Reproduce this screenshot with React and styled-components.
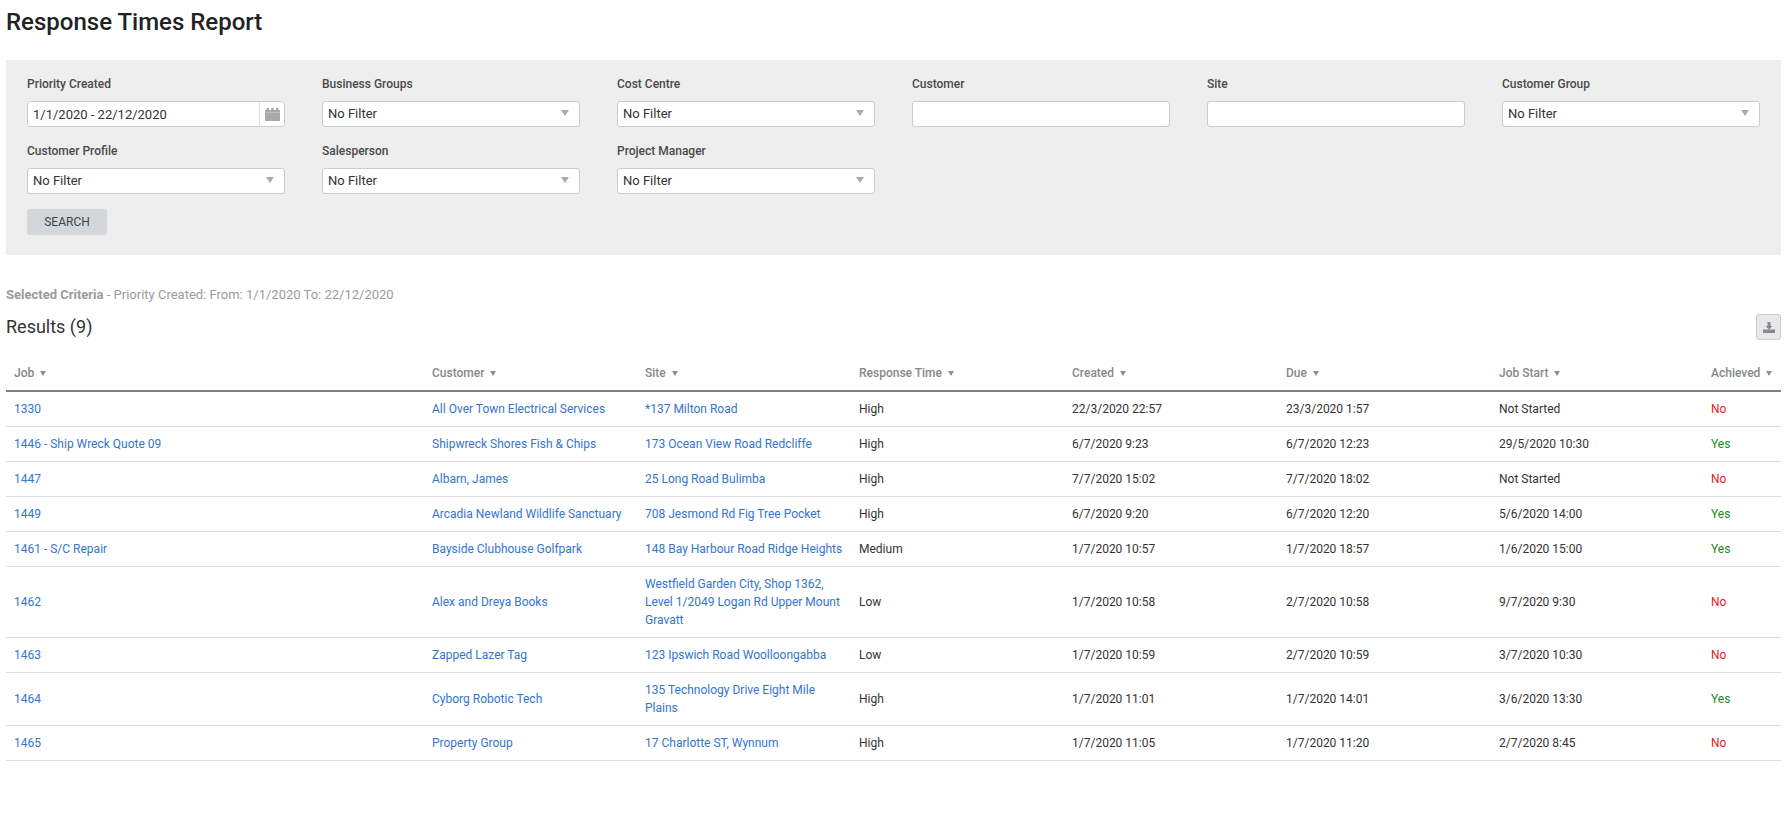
import React from "react";
import styled, { createGlobalStyle } from "styled-components";

const GlobalStyle = createGlobalStyle`
  html, body {
    margin: 0;
    padding: 0;
    background: #fff;
    font-family: Roboto, "Liberation Sans", sans-serif;
    color: #333;
  }
`;

const Page = styled.div`
  padding: 0 6px;
`;

const Title = styled.h1`
  margin: 0;
  padding-top: 6px;
  height: 60px;
  box-sizing: border-box;
  font-size: 24px;
  line-height: 32px;
  font-weight: 500;
  color: #222;
`;

const FilterPanel = styled.form`
  background: #eeeeee;
  height: 195px;
  box-sizing: border-box;
  padding: 15px 21px 0;
`;

const FilterGrid = styled.div`
  display: grid;
  grid-template-columns: repeat(6, 258px);
  column-gap: 37px;
  row-gap: 15px;
`;

const Field = styled.div`
  display: flex;
  flex-direction: column;
`;

const Label = styled.label`
  font-size: 12px;
  line-height: 18px;
  font-weight: 500;
  color: #4a4a4a;
  margin-bottom: 8px;
`;

const TextInput = styled.input`
  box-sizing: border-box;
  width: 100%;
  height: 26px;
  padding: 0 5px;
  border: 1px solid #ccc;
  border-radius: 3px;
  background: #fff;
  font: 400 13px Roboto, sans-serif;
  color: #333;
  outline: none;
`;

const DateWrap = styled.div`
  display: flex;
  height: 26px;
  box-sizing: border-box;
  border: 1px solid #ccc;
  border-radius: 3px;
  background: #fff;
`;

const DateInput = styled(TextInput)`
  flex: 1;
  min-width: 0;
  height: 24px;
  border: none;
`;

const DateButton = styled.span`
  width: 24px;
  border-left: 1px solid #ddd;
  display: flex;
  align-items: center;
  justify-content: center;
`;

const SelectBox = styled.div`
  position: relative;
  height: 26px;
  box-sizing: border-box;
  border: 1px solid #ccc;
  border-radius: 3px;
  background: #fff;
  padding: 0 5px;
  font-size: 13px;
  line-height: 23px;
  color: #333;
`;

const Caret = styled.span`
  position: absolute;
  top: 8px;
  right: 10px;
  width: 0;
  height: 0;
  border-left: 4px solid transparent;
  border-right: 4px solid transparent;
  border-top: 6px solid #aaa;
`;

const SearchButton = styled.button`
  display: block;
  margin-top: 15px;
  width: 80px;
  height: 26px;
  padding: 0;
  border: none;
  border-radius: 2px;
  background: #d4d7da;
  font: 400 12px Roboto, sans-serif;
  color: #444;
`;

const Criteria = styled.p`
  margin: 0;
  padding-top: 30px;
  font-size: 13px;
  line-height: 20px;
  color: #9b9b9b;
  b {
    font-weight: 700;
  }
`;

const ResultsBar = styled.div`
  display: flex;
  align-items: flex-start;
  justify-content: space-between;
  height: 41px;
  margin-top: 9px;
`;

const ResultsTitle = styled.h2`
  margin: 0;
  padding-top: 1px;
  font-size: 18px;
  line-height: 24px;
  font-weight: 400;
  color: #333;
`;

const ExportButton = styled.button`
  width: 25px;
  height: 26px;
  padding: 0;
  border: 1px solid #ccc;
  border-radius: 3px;
  background: #e8e8e8;
  display: flex;
  align-items: center;
  justify-content: center;
`;

const Table = styled.table`
  border-collapse: collapse;
  table-layout: fixed;
  width: 100%;
  font-size: 12px;
`;

const HeadCell = styled.th`
  padding: 0 8px;
  height: 36px;
  box-sizing: border-box;
  text-align: left;
  font-size: 12px;
  font-weight: 500;
  color: #85898b;
  border-bottom: 2px solid #808080;
  white-space: nowrap;
`;

const SortCaret = styled.span`
  display: inline-block;
  margin-left: 6px;
  vertical-align: 1px;
  border-left: 3px solid transparent;
  border-right: 3px solid transparent;
  border-top: 5px solid #8f8f8f;
`;

const Cell = styled.td`
  padding: 8px;
  line-height: 18px;
  border-bottom: 1px solid #ddd;
  color: ${p => p.$color || "#333"};
`;

const RowLink = styled.a`
  color: #3375cf;
  text-decoration: none;
`;

const columns = [
  { name: "Job", width: 418 },
  { name: "Customer", width: 213 },
  { name: "Site", width: 214 },
  { name: "Response Time", width: 213 },
  { name: "Created", width: 214 },
  { name: "Due", width: 213 },
  { name: "Job Start", width: 212 },
  { name: "Achieved", width: 78 },
];

const rows = [
  ["1330", "All Over Town Electrical Services", "*137 Milton Road", "High", "22/3/2020 22:57", "23/3/2020 1:57", "Not Started", "No"],
  ["1446 - Ship Wreck Quote 09", "Shipwreck Shores Fish & Chips", "173 Ocean View Road Redcliffe", "High", "6/7/2020 9:23", "6/7/2020 12:23", "29/5/2020 10:30", "Yes"],
  ["1447", "Albarn, James", "25 Long Road Bulimba", "High", "7/7/2020 15:02", "7/7/2020 18:02", "Not Started", "No"],
  ["1449", "Arcadia Newland Wildlife Sanctuary", "708 Jesmond Rd Fig Tree Pocket", "High", "6/7/2020 9:20", "6/7/2020 12:20", "5/6/2020 14:00", "Yes"],
  ["1461 - S/C Repair", "Bayside Clubhouse Golfpark", "148 Bay Harbour Road Ridge Heights", "Medium", "1/7/2020 10:57", "1/7/2020 18:57", "1/6/2020 15:00", "Yes"],
  ["1462", "Alex and Dreya Books", "Westfield Garden City, Shop 1362, Level 1/2049 Logan Rd Upper Mount Gravatt", "Low", "1/7/2020 10:58", "2/7/2020 10:58", "9/7/2020 9:30", "No"],
  ["1463", "Zapped Lazer Tag", "123 Ipswich Road Woolloongabba", "Low", "1/7/2020 10:59", "2/7/2020 10:59", "3/7/2020 10:30", "No"],
  ["1464", "Cyborg Robotic Tech", "135 Technology Drive Eight Mile Plains", "High", "1/7/2020 11:01", "1/7/2020 14:01", "3/6/2020 13:30", "Yes"],
  ["1465", "Property Group", "17 Charlotte ST, Wynnum", "High", "1/7/2020 11:05", "1/7/2020 11:20", "2/7/2020 8:45", "No"],
];

const selectField = label => (
  <Field key={label}>
    <Label>{label}</Label>
    <SelectBox>
      No Filter
      <Caret />
    </SelectBox>
  </Field>
);

const textField = label => (
  <Field key={label}>
    <Label>{label}</Label>
    <TextInput />
  </Field>
);

const CalendarIcon = () => (
  <svg width="15" height="13" viewBox="0 0 15 13">
    <path fill="#a9a9a9" d="M0 2h15v11H0zM1.5 0H4v2H1.5zM6.2 0h2.6v2H6.2zM11 0h2.5v2H11z" />
    <path fill="#fff" opacity="0.35" d="M0 4h15v.8H0z" />
  </svg>
);

const DownloadIcon = () => (
  <svg width="12" height="11" viewBox="0 0 12 11">
    <path fill="#848a90" d="M4.5 0h3v4h2L6 7.5 2.5 4h2zM0 7.5h12V11H0z" />
  </svg>
);

const App = () => (
  <Page>
    <GlobalStyle />
    <Title>Response Times Report</Title>
    <FilterPanel>
      <FilterGrid>
        <Field>
          <Label>Priority Created</Label>
          <DateWrap>
            <DateInput defaultValue="1/1/2020 - 22/12/2020" />
            <DateButton>
              <CalendarIcon />
            </DateButton>
          </DateWrap>
        </Field>
        {selectField("Business Groups")}
        {selectField("Cost Centre")}
        {textField("Customer")}
        {textField("Site")}
        {selectField("Customer Group")}
        {selectField("Customer Profile")}
        {selectField("Salesperson")}
        {selectField("Project Manager")}
      </FilterGrid>
      <SearchButton type="button">SEARCH</SearchButton>
    </FilterPanel>
    <Criteria>
      <b>Selected Criteria</b> - Priority Created: From: 1/1/2020 To: 22/12/2020
    </Criteria>
    <ResultsBar>
      <ResultsTitle>Results (9)</ResultsTitle>
      <ExportButton type="button">
        <DownloadIcon />
      </ExportButton>
    </ResultsBar>
    <Table>
      <colgroup>
        {columns.map(c => (
          <col key={c.name} style={{ width: c.width }} />
        ))}
      </colgroup>
      <thead>
        <tr>
          {columns.map(c => (
            <HeadCell key={c.name}>
              {c.name}
              <SortCaret />
            </HeadCell>
          ))}
        </tr>
      </thead>
      <tbody>
        {rows.map(r => (
          <tr key={r[0]}>
            <Cell><RowLink href="#">{r[0]}</RowLink></Cell>
            <Cell><RowLink href="#">{r[1]}</RowLink></Cell>
            <Cell><RowLink href="#">{r[2]}</RowLink></Cell>
            <Cell>{r[3]}</Cell>
            <Cell>{r[4]}</Cell>
            <Cell>{r[5]}</Cell>
            <Cell>{r[6]}</Cell>
            <Cell $color={r[7] === "Yes" ? "#1d8a1d" : "#f01818"}>{r[7]}</Cell>
          </tr>
        ))}
      </tbody>
    </Table>
  </Page>
);

export default App;
